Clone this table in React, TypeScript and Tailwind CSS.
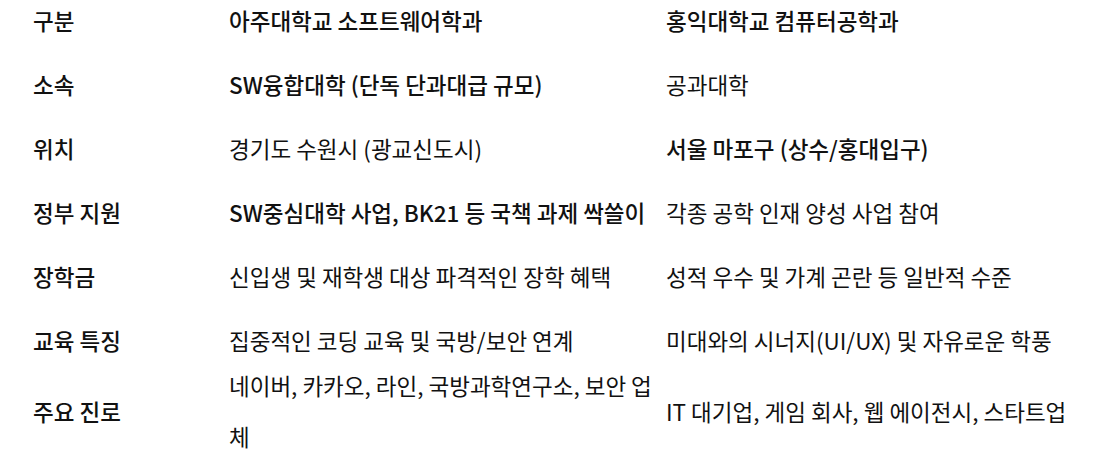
type Row = {
  label: string
  a: string
  b: string
  boldA?: boolean
  boldB?: boolean
}

const rows: Row[] = [
  { label: '소속', a: 'SW융합대학 (단독 단과대급 규모)', b: '공과대학', boldA: true },
  { label: '위치', a: '경기도 수원시 (광교신도시)', b: '서울 마포구 (상수/홍대입구)', boldB: true },
  { label: '정부 지원', a: 'SW중심대학 사업, BK21 등 국책 과제 싹쓸이', b: '각종 공학 인재 양성 사업 참여', boldA: true },
  { label: '장학금', a: '신입생 및 재학생 대상 파격적인 장학 혜택', b: '성적 우수 및 가계 곤란 등 일반적 수준' },
  { label: '교육 특징', a: '집중적인 코딩 교육 및 국방/보안 연계', b: '미대와의 시너지(UI/UX) 및 자유로운 학풍' },
]

function Cell({
  children,
  bold = false,
  className = '',
}: {
  children: React.ReactNode
  bold?: boolean
  className?: string
}) {
  return (
    <div className={`self-center ${bold ? 'font-medium' : 'font-normal'} ${className}`}>
      {children}
    </div>
  )
}

export default function App() {
  return (
    <div
      className="w-[1119px] h-[456px] overflow-hidden bg-white text-[#111] text-[22.5px] leading-[30px]"
      style={{ fontFamily: '"Malgun Gothic", "Noto Sans CJK KR", "Noto Sans", sans-serif' }}
    >
      <div className="pl-[33px]">
        <div className="grid grid-cols-[196px_437px_1fr] pt-[5px] pb-[17px]">
          <Cell bold>구분</Cell>
          <Cell bold>아주대학교 소프트웨어학과</Cell>
          <Cell bold>홍익대학교 컴퓨터공학과</Cell>
        </div>
        {rows.map((r) => (
          <div key={r.label} className="grid grid-cols-[196px_437px_1fr] py-[17px]">
            <Cell bold>{r.label}</Cell>
            <Cell bold={r.boldA}>{r.a}</Cell>
            <Cell bold={r.boldB}>{r.b}</Cell>
          </div>
        ))}
        {/* 줄바꿈되는 마지막 행 */}
        <div className="grid grid-cols-[196px_437px_1fr] -mt-[12px]">
          <Cell bold>주요 진로</Cell>
          <Cell className="leading-[51px]">네이버, 카카오, 라인, 국방과학연구소, 보안 업체</Cell>
          <Cell>IT 대기업, 게임 회사, 웹 에이전시, 스타트업</Cell>
        </div>
      </div>
    </div>
  )
}
